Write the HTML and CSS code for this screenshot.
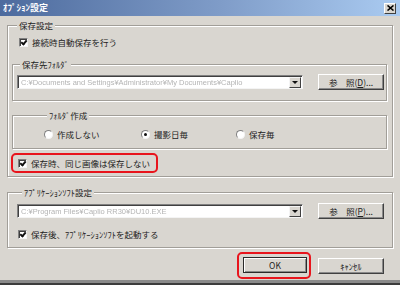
FILE: index.html
```html
<!DOCTYPE html>
<html lang="ja">
<head>
    <meta charset="UTF-8">
    <title>ｵﾌﾟｼｮﾝ設定</title>
    <link rel="stylesheet" href="styles.css">
</head>
<body>
    <div class="window">
        <!-- Title bar -->
        <div class="titlebar">
            <span class="title">ｵﾌﾟｼｮﾝ設定</span>
            <span class="close">
                <svg width="7" height="6" viewBox="0 0 7 6"><path d="M0.5 0.5 L6.5 5.5 M6.5 0.5 L0.5 5.5" stroke="#000" stroke-width="1.6"/></svg>
            </span>
        </div>

        <!-- Save settings -->
        <fieldset class="group outer save">
            <legend>保存設定</legend>

            <label class="check first"><span class="box checked"></span>接続時自動保存を行う</label>

            <fieldset class="group inner folder">
                <legend>保存先ﾌｫﾙﾀﾞ</legend>
                <div class="path-row">
                    <div class="combo">
                        <span class="path">C:¥Documents and Settings¥Administrator¥My Documents¥Caplio</span>
                        <span class="drop"></span>
                    </div>
                    <button class="btn">参　照(<u>D</u>)...</button>
                </div>
            </fieldset>

            <fieldset class="group inner make">
                <legend>ﾌｫﾙﾀﾞ作成</legend>
                <div class="radios">
                    <label class="radio"><span class="dot"></span>作成しない</label>
                    <label class="radio"><span class="dot on"></span>撮影日毎</label>
                    <label class="radio"><span class="dot"></span>保存毎</label>
                </div>
            </fieldset>

            <div class="mark">
                <label class="check"><span class="box checked"></span>保存時、同じ画像は保存しない</label>
            </div>
        </fieldset>

        <!-- Application settings -->
        <fieldset class="group outer app">
            <legend>ｱﾌﾟﾘｹｰｼｮﾝｿﾌﾄ設定</legend>
            <div class="path-row">
                <div class="combo">
                    <span class="path">C:¥Program Files¥Caplio RR30¥DU10.EXE</span>
                    <span class="drop"></span>
                </div>
                <button class="btn">参　照(<u>P</u>)...</button>
            </div>
            <label class="check last"><span class="box checked"></span>保存後、ｱﾌﾟﾘｹｰｼｮﾝｿﾌﾄを起動する</label>
        </fieldset>

        <!-- Dialog buttons -->
        <div class="actions">
            <div class="ring">
                <button class="btn default">OK</button>
            </div>
            <button class="btn cancel">ｷｬﾝｾﾙ</button>
        </div>
    </div>
</body>
</html>
```

FILE: styles.css
```css
* {
    margin: 0;
    padding: 0;
    box-sizing: border-box;
}

body {
    width: 400px;
    height: 285px;
    overflow: hidden;
    font-family: "Noto Sans CJK JP", sans-serif;
    font-size: 8.5px;
    color: #222;
    background: #d9d6d0;
}

.window {
    height: 285px;
    background: #d9d6d0;
    border-bottom: 2px solid #3c3c3c;
    box-shadow: inset 0 -3px 0 #8a8a8a;
}

/* Title bar */
.titlebar {
    height: 16px;
    display: flex;
    align-items: center;
    justify-content: space-between;
    padding: 0 4px 0 3px;
    background: linear-gradient(to right, #4d6b9e, #7f9cc8 55%, #aacbf1);
}

.title {
    color: #fff;
    font-size: 9px;
    font-weight: bold;
    line-height: 12px;
}

.close {
    width: 12px;
    height: 11px;
    display: flex;
    align-items: center;
    justify-content: center;
    background: #d9d6d0;
    border: 1px solid;
    border-color: #fff #404040 #404040 #fff;
}

/* Group boxes */
.group {
    border: 1px solid #a19e98;
    box-shadow: inset 1px 1px 0 #fff, 1px 1px 0 #fff;
    min-width: 0;
}

.group legend {
    margin-left: 5px;
    padding: 0 2px;
    line-height: 12px;
    background: #d9d6d0;
}

.outer {
    width: 386px;
    margin-left: 7px;
}

.save {
    margin-top: 3px;
    padding: 0 5px 3px 4px;
}

.inner {
    width: 375px;
}

.inner legend {
    margin-left: 3px;
}

.folder {
    margin-top: 10px;
    height: 43px;
    padding: 4px 2px 0 4px;
}

.make {
    margin-top: 8px;
    height: 40px;
    padding: 8px 0 0 31px;
}

.app {
    margin-top: 9px;
    padding: 5px 8px 7px 9px;
}

/* Check boxes */
.check {
    display: flex;
    align-items: center;
    gap: 4px;
    height: 11px;
    line-height: 11px;
}

.check.first {
    margin: 6px 0 0 7px;
}

.check.last {
    margin: 10px 0 0 1px;
}

.box {
    width: 9px;
    height: 9px;
    background: #fff;
    border: 1px solid;
    border-color: #808080 #f4f4f4 #f4f4f4 #808080;
    box-shadow: inset 1px 1px 0 #404040;
    position: relative;
}

.box.checked::after {
    content: "";
    position: absolute;
    left: 2px;
    top: 0;
    width: 2px;
    height: 4px;
    border: solid #111;
    border-width: 0 2px 2px 0;
    transform: rotate(40deg);
}

/* Red highlight */
.mark {
    width: 147px;
    height: 20px;
    margin: 4px 0 0 -1px;
    padding-left: 5px;
    display: flex;
    align-items: center;
    border: 2px solid #e8141c;
    border-radius: 5px;
}

/* Radios */
.radios {
    display: flex;
    height: 11px;
}

.radio {
    display: flex;
    align-items: center;
    gap: 4px;
    line-height: 11px;
}

.radio:nth-child(1) {
    width: 97px;
}

.radio:nth-child(2) {
    width: 95px;
}

.dot {
    width: 9px;
    height: 9px;
    border-radius: 50%;
    background: #fff;
    border: 1px solid;
    border-color: #808080 #f4f4f4 #f4f4f4 #808080;
    display: flex;
    align-items: center;
    justify-content: center;
}

.dot.on::after {
    content: "";
    width: 3px;
    height: 3px;
    border-radius: 50%;
    background: #111;
}

/* Path rows */
.path-row {
    display: flex;
    align-items: center;
    gap: 15px;
    height: 16px;
}

.combo {
    width: 287px;
    height: 14px;
    display: flex;
    align-items: center;
    justify-content: space-between;
    background: #fff;
    border: 1px solid;
    border-color: #808080 #f4f4f4 #f4f4f4 #808080;
    box-shadow: inset 1px 1px 0 #404040;
    padding: 0 1px 0 3px;
    overflow: hidden;
}

.path {
    font-family: "Liberation Sans", sans-serif;
    font-size: 7.5px;
    color: #b4b4b4;
    filter: blur(0.7px);
    white-space: nowrap;
}

.drop {
    flex: none;
    width: 12px;
    height: 11px;
    display: flex;
    align-items: center;
    justify-content: center;
    background: #d9d6d0;
    border: 1px solid;
    border-color: #f4f4f4 #404040 #404040 #f4f4f4;
}

.drop::after {
    content: "";
    border: 3px solid transparent;
    border-top: 3px solid #111;
    border-bottom: 0;
}

/* Buttons */
.btn {
    width: 66px;
    height: 16px;
    font-family: "Noto Sans CJK JP", sans-serif;
    font-size: 8.5px;
    color: #222;
    background: #d9d6d0;
    border: 1px solid;
    border-color: #fff #404040 #404040 #fff;
    box-shadow: inset -1px -1px 0 #8a8a8a;
    line-height: 12px;
}

.btn u {
    text-decoration: underline;
}

.actions {
    display: flex;
    align-items: center;
    justify-content: flex-end;
    gap: 7px;
    margin-top: 4px;
    padding-right: 16px;
}

.ring {
    padding: 3px 2px 4px 4px;
    border: 2px solid #e8141c;
    border-radius: 5px;
}

.btn.default {
    width: 64px;
    border: 1px solid #2a2a2a;
    box-shadow: inset 1px 1px 0 #fff, inset -1px -1px 0 #8a8a8a;
}
```
